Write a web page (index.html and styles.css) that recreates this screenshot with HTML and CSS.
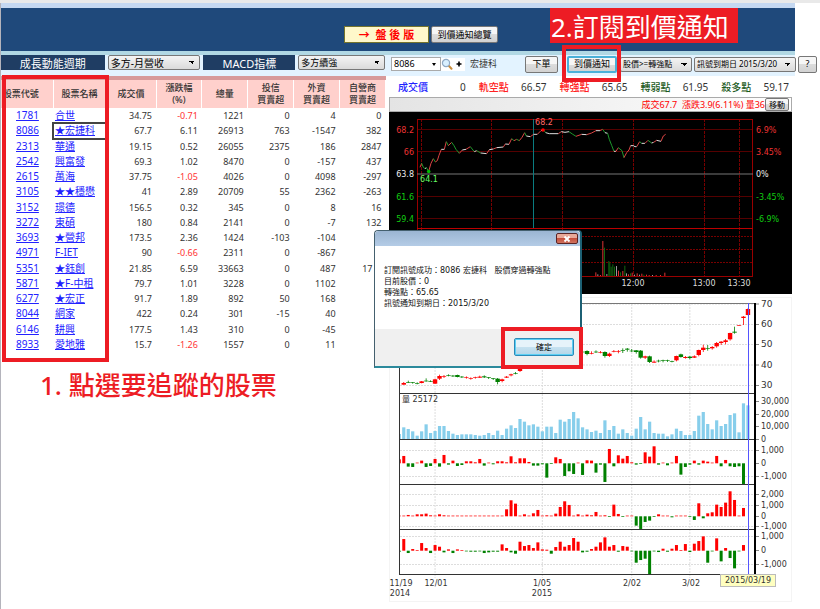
FILE: index.html
```html
<!DOCTYPE html>
<html lang="zh-Hant">
<head>
  <meta charset="UTF-8">
  <meta name="viewport" content="width=device-width, initial-scale=1.0">
  <title>到價通知</title>
  <link rel="stylesheet" href="styles.css">
</head>
<body>
  <div class="window-edge"></div>
  <div class="page">
    <header class="header">
      <button class="btn-after" type="button">→&nbsp; 盤 後 版</button>
      <button class="btn overview" type="button">到價通知總覽</button>
      <div class="step-banner">2.訂閱到價通知</div>
    </header>

    <main class="workspace">
      <section class="screener">
        <div class="band filters">
          <label class="filter-label" for="cycle">成長動能週期</label>
          <select id="cycle" class="select wide"><option>多方-月營收</option></select>
          <label class="filter-label" for="macd">MACD指標</label>
          <select id="macd" class="select"><option>多方續強</option></select>
        </div>

        <div class="stocks-wrap">
          <table class="stocks">
            <colgroup>
              <col class="c-code"><col class="c-name"><col class="c-price"><col class="c-num">
              <col class="c-num"><col class="c-num"><col class="c-num"><col class="c-num">
            </colgroup>
            <thead>
              <tr>
                <th class="first">股票代號</th><th>股票名稱</th><th>成交價</th><th>漲跌幅<br>(%)</th>
                <th>總量</th><th>投信<br>買賣超</th><th>外資<br>買賣超</th><th>自營商<br>買賣超</th>
              </tr>
            </thead>
            <tbody id="stock-rows"></tbody>
          </table>
          <div class="frame frame-list"></div>
        </div>
        <p class="step-note">1. 點選要追蹤的股票</p>
      </section>

      <section class="detail">
        <div class="band">
          <div class="toolbar">
            <div class="combo">
              <input id="code" type="text" value="8086" aria-label="股票代號">
              <button type="button" aria-label="展開"><span class="caret"></span></button>
            </div>
            <button class="icon-btn" type="button" aria-label="搜尋">
              <svg viewBox="0 0 12 12"><path d="M7.5 7.5l3 3.2" stroke="#c98d3c" stroke-width="2" stroke-linecap="round"/><circle cx="5" cy="5" r="3.6" fill="#d8efff" stroke="#8fa9c4" stroke-width="1.2"/></svg>
            </button>
            <button class="icon-btn" type="button" aria-label="新增">
              <svg viewBox="0 0 12 12"><path d="M6 3.5v5M3.5 6h5" stroke="#000" stroke-width="1.6"/></svg>
            </button>
            <label class="stock-name" for="code">宏捷科</label>
            <button class="btn order" type="button">下單</button>
            <div class="notify">
              <button class="btn active" type="button">到價通知</button>
              <div class="frame frame-notify"></div>
            </div>
            <select class="select cond" aria-label="條件"><option>股價&gt;=轉強點</option></select>
            <select class="select expiry" aria-label="到期日"><option>訊號到期日 2015/3/20</option></select>
            <button class="btn help" type="button">?</button>
          </div>
        </div>

        <div class="levels">
          <div class="level blue"><b>成交價</b><span>0</span></div>
          <div class="level red"><b>軌空點</b><span>66.57</span></div>
          <div class="level red"><b>轉強點</b><span>65.65</span></div>
          <div class="level green"><b>轉弱點</b><span>61.95</span></div>
          <div class="level green"><b>殺多點</b><span>59.17</span></div>
        </div>

        <div class="quote-bar">
          <span>成交67.7&nbsp; 漲跌3.9(6.11%) 量36</span>
          <button class="btn move" type="button">移動</button>
        </div>

        <svg id="intraday" class="intraday" viewBox="389 112 403 182"></svg>
        <svg id="daily" class="daily" viewBox="389 297 403 305"></svg>

        <div class="dialog" role="dialog">
          <div class="dialog-title">
            <button class="close" type="button" aria-label="關閉">
              <svg viewBox="0 0 10 8"><path d="M2.5 1.5l5 5M7.5 1.5l-5 5" stroke="#fff" stroke-width="1.8"/></svg>
            </button>
          </div>
          <div class="dialog-body">
            訂閱訊號成功：8086 宏捷科&nbsp;&nbsp; 股價穿過轉強點<br>
            目前股價：0<br>
            轉強點：65.65<br>
            訊號通知到期日：2015/3/20
          </div>
          <div class="dialog-foot">
            <button class="ok" type="button">確定</button>
            <div class="frame frame-ok"></div>
          </div>
        </div>
      </section>
    </main>
  </div>
  <script src="script.js"></script>
</body>
</html>
```

FILE: styles.css
```css
* {
  box-sizing: border-box;
}
body {
  margin: 0;
  background: #fff;
  color: #333;
  font-family: "Noto Sans", "Noto Sans CJK TC", sans-serif;
  font-size: 9px;
  line-height: 12px;
}
button, select, input {
  font: inherit;
  color: #000;
  margin: 0;
  padding: 0;
}
.window-edge {
  height: 3px;
  background: #e9e9e9;
}
.page {
  min-height: calc(100vh - 3px);
  margin-right: 25px;
  border-left: 1px solid #b4b4bc;
}

/* header */
.header {
  position: relative;
  display: flex;
  justify-content: center;
  align-items: center;
  gap: 2px;
  height: 52px;
  padding: 10px 0 0 46px;
  background: #1f497b;
  border-top: 5px solid #c5d8f1;
  border-bottom: 4px solid #b1d8e4;
}
.btn, .btn-after {
  height: 17px;
  white-space: nowrap;
}
.btn {
  padding: 0 3px;
  border: 1px solid #777;
  border-radius: 2px;
  background: linear-gradient(#f6f6f6 50%, #dcdcdc 50%, #d2d2d2);
}
.overview {
  width: 67px;
}
.btn-after {
  width: 85px;
  border: 1px solid #75742c;
  background: #fff8cb;
  color: #f00;
  font-size: 11px;
  font-weight: bold;
}
.step-banner {
  position: absolute;
  top: 0;
  right: 57px;
  width: 188px;
  height: 35px;
  padding-left: 1px;
  background: #ed1c24;
  color: #fff;
  font-size: 26px;
  line-height: 38px;
  white-space: nowrap;
}

.workspace {
  display: flex;
}
.screener {
  flex: 0 0 388px;
}
.detail {
  position: relative;
  flex: 1;
  min-width: 0;
}
.band {
  height: 21px;
  background: #e3f3ff;
}

/* filters */
.filters {
  display: grid;
  grid-template-columns: 104fr 93fr 92fr 87fr;
  gap: 3px;
  padding-right: 4px;
  align-items: start;
}
.filter-label {
  height: 15px;
  background: #1f3d63;
  color: #fff;
  font-size: 11px;
  line-height: 17px;
  text-align: center;
}
.select {
  appearance: none;
  min-width: 0;
  height: 15px;
  padding: 0 2px;
  border: 1px solid #777;
  border-radius: 2px;
  background:
    linear-gradient(to bottom right, #000 50%, transparent 50%) right 4px center / 3px 3px no-repeat,
    linear-gradient(to bottom left, #000 50%, transparent 50%) right 7px center / 3px 3px no-repeat,
    linear-gradient(#f4f4f4, #dadada);
}
.select.wide {
  font-size: 10px;
}

/* stock table */
.stocks-wrap {
  position: relative;
  padding-right: 3px;
}
.stocks {
  width: 100%;
  height: 276px;
  border-collapse: collapse;
  table-layout: fixed;
}
.c-code { width: 52px; }
.c-name { width: 53px; }
.c-price { width: 50px; }
.stocks th {
  height: 30px;
  padding: 0;
  border-top: 4px solid #d79a9a;
  border-right: 1px solid #fff;
  background: #ffd0cc;
  font-weight: 500;
}
.stocks th.first {
  padding-right: 12px;
  white-space: nowrap;
}
.stocks td {
  padding: 0 4px 0 0;
  line-height: 13px;
  text-align: right;
  white-space: nowrap;
}
.stocks td.code, .stocks td.name {
  padding: 0;
  color: #22f;
  font-size: 10px;
}
.stocks td.code {
  padding-left: 15px;
  text-align: left;
}
.stocks td.name {
  padding-left: 2px;
  text-align: left;
}
.stocks td.selected {
  outline: 2px solid #444;
  outline-offset: -1px;
}
.stocks a {
  color: #22f;
}
.stocks td.down {
  color: #f33;
}
.step-note {
  margin: 18px 0 0 39px;
  color: #ed1c24;
  font-size: 26px;
  font-weight: 500;
  line-height: 30px;
}

/* red marker frames laid over the page */
.frame {
  position: absolute;
  border: 4px solid #ed1c24;
  pointer-events: none;
}
.frame-list {
  top: -1px;
  left: 1px;
  width: 107px;
  bottom: -10px;
}
.frame-notify {
  inset: -11px -4px -9px -5px;
}
.frame-ok {
  top: -2px;
  right: -3px;
  width: 82px;
  height: 42px;
}

/* order toolbar */
.toolbar {
  display: flex;
  align-items: center;
  height: 18px;
  margin-right: -22px;
  padding-left: 2px;
}
.combo {
  display: flex;
  width: 50px;
  height: 14px;
  border: 1px solid #aaa;
  background: #fff;
}
.combo input {
  flex: 1;
  min-width: 0;
  padding-left: 2px;
  border: 0;
}
.combo button, .icon-btn {
  width: 12px;
  border: 0;
  background: #fff;
}
.caret {
  display: block;
  margin: 0 auto;
  width: 0;
  border: 2px solid transparent;
  border-top: 3px solid #000;
  border-bottom: 0;
}
.icon-btn {
  height: 13px;
}
.icon-btn svg {
  display: block;
  width: 12px;
  height: 12px;
}
.stock-name {
  flex: 1;
  margin-left: 5px;
}
.order {
  width: 33px;
  margin-right: 9px;
}
.notify {
  position: relative;
  display: flex;
  z-index: 1;
}
.btn.active {
  width: 50px;
  border: 2px solid #4ab0d8;
  padding: 0;
}
.cond, .expiry {
  font-size: 8px;
}
.cond {
  width: 72px;
  margin: 0 2px 0 3px;
}
.expiry {
  width: 102px;
  margin-right: 2px;
}
.help {
  width: 19px;
}

/* price levels */
.levels {
  display: flex;
  gap: 13px;
  height: 21px;
  padding: 0 6px 0 9px;
  font-size: 10px;
  line-height: 22px;
}
.level {
  flex: 1;
  display: flex;
  justify-content: space-between;
}
.level b { font-weight: 500; }
.blue b { color: #22f; }
.red b { color: #f22; }
.green b { color: #1c5a1c; }

.quote-bar {
  display: flex;
  justify-content: flex-end;
  align-items: center;
  height: 15px;
  margin-right: 3px;
  padding-right: 2px;
  border: 1px solid #aaa;
  background: linear-gradient(90deg, #e4e4e4, #fff);
  color: #f00;
}
.move {
  width: 24px;
  height: 13px;
  padding: 0;
  font-size: 8px;
  line-height: 10px;
}

/* charts */
.intraday, .daily {
  display: block;
  width: calc(100% - 3px);
  font-family: "DejaVu Sans", "Noto Sans CJK TC", sans-serif;
  font-size: 8px;
}
.intraday {
  background: #000;
}
.daily {
  margin-top: 3px;
}

/* message box */
.dialog {
  position: absolute;
  top: 175px;
  left: -15px;
  width: 208px;
  border: 1px solid #44606e;
  border-bottom: 2px solid #2c8a9c;
  border-right: 2px solid #1c6074;
  border-radius: 4px 4px 0 0;
  background: #fff;
  font-family: "DejaVu Sans", "Noto Sans CJK TC", sans-serif;
  font-size: 8px;
  line-height: 11px;
  color: #111;
}
.dialog-title {
  display: flex;
  justify-content: flex-end;
  height: 15px;
  padding: 2px 2px 0 0;
  border-radius: 4px 4px 0 0;
  background: linear-gradient(#9bb5d2, #b4cce6);
}
.close {
  width: 22px;
  height: 11px;
  border: 1px solid #5b2424;
  border-radius: 2px;
  background: linear-gradient(#e8a898 45%, #c54f3c 50%, #cf7460);
}
.close svg {
  display: block;
  margin: auto;
  width: 10px;
  height: 8px;
}
.dialog-body {
  height: 83px;
  padding: 19px 9px 0;
  white-space: nowrap;
}
.dialog-foot {
  position: relative;
  display: flex;
  justify-content: flex-end;
  height: 37px;
  padding: 9px 6px 0;
  background: #f0f0f0;
}
.ok {
  width: 60px;
  height: 18px;
  border: 1px solid #2c8ab8;
  border-radius: 2px;
  box-shadow: inset 0 0 0 1px #5cd0f4;
  background: linear-gradient(#e6f3fa 50%, #c6e2f0 50%, #b4d6e8);
}
```

FILE: script.js
```js
const stocks = [
  ['1781', '合世', '34.75', '-0.71', '1221', '0', '4', '0'],
  ['8086', '★宏捷科', '67.7', '6.11', '26913', '763', '-1547', '382'],
  ['2313', '華通', '19.15', '0.52', '26055', '2375', '186', '2847'],
  ['2542', '興富發', '69.3', '1.02', '8470', '0', '-157', '437'],
  ['2615', '萬海', '37.75', '-1.05', '4026', '0', '4098', '-297'],
  ['3105', '★★穩懋', '41', '2.89', '20709', '55', '2362', '-263'],
  ['3152', '璟德', '156.5', '0.32', '345', '0', '8', '16'],
  ['3272', '東碩', '180', '0.84', '2141', '0', '-7', '132'],
  ['3693', '★營邦', '173.5', '2.36', '1424', '-103', '-104', ''],
  ['4971', 'F-IET', '90', '-0.66', '2311', '0', '-867', ''],
  ['5351', '★鈺創', '21.85', '6.59', '33663', '0', '487', '17&emsp;'],
  ['5871', '★F-中租', '79.7', '1.01', '3228', '0', '1102', ''],
  ['6277', '★宏正', '91.7', '1.89', '892', '50', '168', ''],
  ['8044', '網家', '422', '0.24', '301', '-15', '40', ''],
  ['6146', '耕興', '177.5', '1.43', '310', '0', '-45', ''],
  ['8933', '愛地雅', '15.7', '-1.26', '1557', '0', '11', '']
];

document.getElementById('stock-rows').innerHTML = stocks.map(s => `
  <tr>
    <td class="code"><a href="#">${s[0]}</a></td>
    <td class="name${s[0] === '8086' ? ' selected' : ''}"><a href="#">${s[1]}</a></td>
    <td>${s[2]}</td>
    <td class="${s[3] < 0 ? 'down' : ''}">${s[3]}</td>
    ${s.slice(4).map(v => `<td>${v}</td>`).join('')}
  </tr>`).join('');

// svg helpers
const line = (x1, y1, x2, y2, color, extra = '') =>
  `<line x1="${x1}" y1="${y1}" x2="${x2}" y2="${y2}" stroke="${color}" ${extra}/>`;
const rect = (x, y, w, h, color) =>
  `<rect x="${x}" y="${y}" width="${w}" height="${h}" fill="${color}"/>`;
const text = (x, y, t, color, anchor = 'start') =>
  `<text x="${x}" y="${y + 3}" fill="${color}" text-anchor="${anchor}">${t}</text>`;

// intraday chart
function drawIntraday() {
  const red = '#900';
  let out = '';
  [421.5, 491.5, 562.5, 633.5, 704.5, 739.5].forEach(x => {
    out += line(x, 119, x, 276, '#700', 'stroke-dasharray="3 1"');
  });
  [129.5, 151.5, 196.5, 218.5].forEach(y => { out += line(417, y, 753, y, '#500'); });
  [236.5, 249.5, 262.5].forEach(y => { out += line(417, y, 753, y, '#700', 'stroke-dasharray="2 1"'); });
  out += `<rect x="417.5" y="119.5" width="335" height="157" fill="none" stroke="${red}"/>`;
  out += line(417, 228.5, 753, 228.5, '#b00');
  out += line(417, 174, 753, 174, '#777');
  out += line(533.5, 119, 533.5, 228, '#0a7c80');

  const price = [105,172, 110,160, 115,172, 120,176, 124,173, 131,184, 138,160, 145,146, 151,156,
    157,152, 162,136, 169,118, 178,118, 184,95, 190,107, 200,97, 207,107, 213,118, 223,130, 232,120,
    243,118, 256,110, 268,125, 275,122, 287,129, 305,131, 313,119, 325,117, 335,113, 355,111, 361,102,
    372,103, 380,86, 387,92, 395,88, 403,92, 411,82, 419,68, 424,78, 436,80, 446,73, 457,73, 468,62,
    475,59, 482,68, 493,71, 520,71, 529,65, 540,67, 552,65, 562,72, 573,79, 590,73, 605,74, 620,69,
    633,62, 645,62, 653,58, 660,68, 668,70, 673,88, 680,106, 687,124, 693,124, 700,113, 711,122,
    717,143, 725,128, 732,120, 737,107, 745,107, 750,110, 755,110, 764,95, 770,100, 780,100, 789,91,
    800,99, 806,97, 815,91, 828,94, 835,78, 842,73];
  out += '<g transform="translate(385 110) scale(.3333)" stroke-width="3">';
  for (let i = 2; i < price.length; i += 2) {
    const dy = price[i + 1] - price[i - 1];
    const color = Math.abs(dy) <= 3 ? '#ddd' : dy < 0 ? '#d44' : '#1d9a2c';
    out += line(price[i - 2], price[i - 1], price[i], price[i + 1], color);
  }
  out += '</g>';
  out += '<circle cx="543" cy="130" r="1.8" fill="#f00"/><circle cx="428.7" cy="171.5" r="1.8" fill="#0b0"/>';
  out += text(544, 122, '68.2', '#f66', 'middle') + text(429, 179, '64.1', '#6f6', 'middle');

  const vol = [[676,11,'r'],[682,5,'w'],[690,3,'r'],[697,105,'r'],[702,85,'g'],[709,6,'w'],[715,45,'g'],
    [718,40,'g'],[722,28,'g'],[727,35,'g'],[732,28,'g'],[738,30,'w'],[744,16,'r'],[750,11,'g'],[757,15,'r'],
    [763,31,'g'],[768,8,'w'],[774,5,'r'],[780,8,'g'],[785,10,'r'],[792,4,'w'],[800,8,'r'],[807,4,'w'],
    [814,7,'r'],[820,4,'g'],[828,4,'r'],[836,3,'r'],[846,3,'w'],[857,3,'r'],[870,3,'r'],[883,10,'r']];
  const colors = { r: '#d33', g: '#161', w: '#999' };
  vol.forEach(([x, h, c]) => { out += rect(370 + x / 3, 276 - h / 3, 1, h / 3, colors[c]); });

  [[129.5, '68.2', '6.9%', '#e33'], [151.5, '66', '3.45%', '#e33'], [174, '63.8', '0%', '#eee'],
    [196.5, '61.6', '-3.45%', '#1c1'], [218.5, '59.4', '-6.9%', '#1c1']].forEach(r => {
    out += text(414, r[0], r[1], r[3], 'end') + text(756, r[0], r[2], r[3]);
  });
  out += text(633, 283, '12:00', '#ddd', 'middle') + text(704, 283, '13:00', '#ddd', 'middle')
    + text(739, 283, '13:30', '#ddd', 'middle');
  document.getElementById('intraday').innerHTML = out;
}

// daily chart: candles, volume and the three net-buy panels
const STEP = 4.47;
const barX = i => 399.3 + i * STEP;

// index, body top, body bottom, high, low, r = up / g = down
const candles = [
  [1,264,269,261,269,'r'],[2,261,263,257,264,'g'],[3,262,264,261,266,'g'],[4,264,266,262,268,'g'],[5,259,264,258,265,'r'],
  [6,257,259,250,260,'g'],[7,258,260,256,261,'g'],[8,253,266,251,267,'r'],[9,243,251,239,255,'r'],[10,243,245,240,249,'r'],
  [11,240,242,238,244,'g'],[12,242,244,240,246,'g'],[13,240,246,239,247,'g'],[14,245,247,243,249,'g'],[15,247,249,244,251,'r'],
  [16,249,251,247,254,'r'],[17,247,249,245,251,'r'],[18,245,248,242,249,'r'],[19,244,247,241,249,'g'],[20,247,249,246,252,'g'],
  [21,250,252,249,255,'g'],[22,251,261,249,268,'g'],[23,253,258,251,262,'r'],[24,245,248,243,249,'r'],[25,238,241,236,244,'r'],
  [26,234,236,231,238,'g'],[27,218,228,216,231,'r'],[41,170,172,167,174,'g'],[42,168,177,166,181,'g'],[43,174,176,169,178,'r'],
  [44,170,172,166,174,'g'],[45,171,173,168,175,'r'],[46,171,183,169,188,'g'],[47,176,183,173,186,'r'],[48,168,170,165,172,'r'],
  [49,168,170,165,175,'r'],[50,165,167,160,174,'g'],[51,161,164,159,170,'g'],[52,167,169,162,171,'g'],[53,166,171,165,176,'g'],
  [54,167,188,165,191,'g'],[55,184,188,182,192,'r'],[56,184,201,182,204,'g'],[57,200,203,196,203,'r'],[58,197,199,194,202,'g'],
  [59,196,198,194,202,'g'],[60,196,198,194,201,'g'],[61,198,200,197,202,'g'],[62,183,196,182,199,'r'],[63,178,186,176,188,'g'],
  [64,186,189,183,191,'r'],[65,185,189,183,193,'g'],[66,184,188,181,189,'r'],[67,165,180,164,184,'r'],[68,158,165,149,171,'r'],
  [69,159,161,150,167,'g'],[70,156,160,153,164,'r'],[71,144,154,141,158,'r'],[72,140,144,138,150,'r'],[73,136,141,132,148,'r'],
  [74,114,133,113,137,'r'],[75,110,113,95,116,'g'],[76,90,92,90,92,'r'],[77,65,69,63,90,'r'],[78,42,60,40,61,'r']
];
const volume = [15,35,30,23,10,23,44,18,24,39,39,24,16,12,14,14,14,12,10,12,18,12,25,12,31,41,33,60,52,41,44,37,
  23,37,37,18,58,52,60,81,62,35,29,21,25,18,56,27,39,16,29,18,10,31,66,29,52,18,16,16,8,14,31,24,12,12,24,70,81,
  45,29,56,39,45,72,77,20,107,101];
const trust = [12,22,-10,-11,1,8,-11,-8,13,-10,25,-4,8,-8,-5,6,6,3,13,-7,1,-3,6,6,3,21,3,15,15,4,-7,-7,-3,-43,-2,
  18,13,-38,-24,-32,1,-35,9,8,-28,-4,-56,43,-9,24,14,22,3,-4,-2,33,20,51,-4,1,-6,1,22,-34,-11,-4,8,-4,8,5,1,22,
  -9,10,-9,-11,-9,-62];
const foreign = [1,1,4,1,6,6,8,3,1,6,3,1,1,1,1,1,1,1,1,1,1,1,1,1,21,48,38,2,6,1,9,19,1,3,1,8,28,45,34,2,6,2,5,
  3,13,2,3,-1,35,7,-1,2,2,-28,-38,-17,-13,-2,6,1,1,-3,1,1,1,-2,-11,39,-6,9,12,35,28,41,75,49,2,25];
const dealer = [-3,35,-7,5,1,23,8,-7,17,12,-5,4,-7,4,1,-2,-3,-3,-2,-7,-5,-3,-3,19,8,-5,-9,27,14,17,8,25,4,3,-9,
  11,27,12,17,38,27,-5,-3,5,12,25,40,12,17,-3,14,12,-2,-36,-28,-24,-72,-1,-4,6,-3,6,17,1,20,-4,21,29,43,-36,-2,
  37,-32,8,-22,-53,-2,17];

function netBars(data, zero) {
  return data.map((v, i) => {
    const h = Math.max(Math.abs(v) / 3, 0.7);
    const left = i === 0 ? 400 : barX(i) - 1.5;
    return rect(left, v < 0 ? zero : zero - h, barX(i) + 1.5 - left, h, v < 0 ? '#008000' : '#f00');
  }).join('');
}

function drawDaily() {
  const ink = '#333';
  let out = '<rect x="389.5" y="297.5" width="402" height="304" fill="none" stroke="#f4f4f4"/>';
  const dash = 'stroke-dasharray="2 1"';
  [304, 324.5, 344.5, 365, 385.5, 450.5, 476.5, 494.5, 505.5, 526.5, 536.5, 564.5].forEach(y => {
    out += line(400, y, 754, y, '#ddd', dash) + line(755, y, 759, y, '#888');
  });
  [401.5, 414.5, 426.5, 439.5, 463.5, 516.5, 550.5].forEach(y => { out += line(755, y, 759, y, '#888'); });
  [8, 32, 52, 65].forEach(i => {
    out += line(barX(i), 304, barX(i), 578, '#ddd', dash);
  });

  candles.forEach(([i, top, bottom, high, low, c]) => {
    const color = c === 'r' ? '#f00' : '#008000';
    out += rect(barX(i) - 0.4, 295 + high / 3, 0.8, (low - high) / 3, color);
    out += rect(barX(i) - 2.2, 295 + top / 3, 4.4, (bottom - top) / 3, color);
  });
  volume.forEach((v, i) => {
    const left = i === 0 ? 400 : barX(i) - 1.6;
    out += rect(left, 439 - v / 3, barX(i) + 1.6 - left, v / 3, '#87ceeb');
  });
  out += netBars(trust, 463.3) + netBars(foreign, 516.3) + netBars(dealer, 550.7);

  [393.5, 439.5, 484.5, 529.5, 574.5].forEach(y => { out += line(399, y, 755, y, ink); });
  out += line(399, 303.5, 755, 303.5, '#777') + line(399.5, 303, 399.5, 575, ink);
  out += line(755, 303, 755, 575, '#000', 'stroke-width="2"');
  out += line(748.5, 303, 748.5, 575, '#55f');

  out += `<g font-size="9">${[['70', 304], ['60', 324], ['50', 344], ['40', 365], ['30', 385]]
    .map(([t, y]) => text(761, y, t, ink)).join('')}</g>`;
  [['30,000', 401], ['20,000', 414], ['10,000', 426], ['0', 439], ['1,000', 450], ['0', 463], ['-1,000', 476],
    ['2,000', 494], ['1,000', 505], ['0', 516], ['-1,000', 526], ['1,000', 536], ['0', 550], ['-1,000', 564]]
    .forEach(([t, y]) => { out += text(761, y, t, ink); });
  [['11/19', 401, 583], ['2014', 400, 593], ['12/01', 436, 583], ['1/05', 542, 583], ['2015', 542, 593],
    ['2/02', 632, 583], ['3/02', 691, 583]]
    .forEach(([t, x, y]) => { out += text(x, y, t, ink, 'middle'); });
  out += text(402, 399, '量 25172', ink);
  out += '<rect x="720.5" y="574.5" width="55" height="12" fill="#ffffc0" stroke="#bbb"/>';
  out += text(748, 580, '2015/03/19', ink, 'middle');
  document.getElementById('daily').innerHTML = out;
}

drawIntraday();
drawDaily();
```
